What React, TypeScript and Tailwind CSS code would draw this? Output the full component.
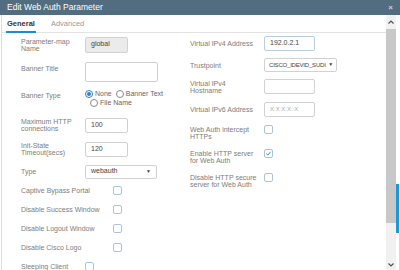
import React from "react";

const font = { fontFamily: '"Liberation Sans", Arial, sans-serif' };

function Checkbox({ checked = false }: { checked?: boolean }) {
  return (
    <div className="w-[9px] h-[9px] rounded-[2px] border border-[#a9c3e0] bg-white flex items-center justify-center">
      {checked && (
        <svg width="7" height="7" viewBox="0 0 8 8">
          <path d="M1.5 4.2 L3.2 5.8 L6.5 2" stroke="#3b82c4" strokeWidth="1.1" fill="none" />
        </svg>
      )}
    </div>
  );
}

function Radio({ checked = false }: { checked?: boolean }) {
  return (
    <div className={`w-[8px] h-[8px] rounded-full border ${checked ? "border-[#2d7fd0]" : "border-[#8a8a8a]"} bg-white flex items-center justify-center`}>
      {checked && <div className="w-[4px] h-[4px] rounded-full bg-[#2d7fd0]" />}
    </div>
  );
}

function Label({ children, w }: { children: React.ReactNode; w: string }) {
  return <div className={`${w} text-[7px] leading-[7px] text-[#7c7c7c]`}>{children}</div>;
}

export default function App() {
  return (
    <div className="w-[400px] h-[270px] overflow-hidden bg-white flex flex-col" style={font}>
      <div className="h-[15px] bg-[#526c80] flex items-center justify-between pl-[7px] pr-[7px] shrink-0">
        <span className="text-white text-[8.5px] leading-[9px]">Edit Web Auth Parameter</span>
        <span className="text-[#c9d3db] text-[8px] leading-[8px] font-bold">×</span>
      </div>
      <div className="flex-1 flex min-h-0">
        <div className="w-[2px] border-r border-[#dcdcdc] shrink-0" />
        <div className="flex-1 flex flex-col min-w-0">
          <div className="h-[18px] border-b border-[#e3e3e3] flex items-end pl-[4px] shrink-0">
            <div className="px-[1px] pb-[3px] border-b-2 border-[#1f8ad4] mb-[-1px] text-[7.5px] leading-[8px] text-[#333] font-semibold">General</div>
            <div className="ml-[15px] pb-[4px] text-[7.5px] leading-[8px] text-[#999]">Advanced</div>
          </div>
          <div className="flex">
            {/* left column */}
            <div className="w-[168px] pl-[19px] flex flex-col">
              <div className="mt-[3px] h-[17px] flex items-center">
                <Label w="w-[64px]">Parameter-map<br />Name</Label>
                <div className="w-[43px] h-[16px] rounded-[2px] border border-[#d2d2d2] bg-[#ebebeb] flex items-center pl-[5px] text-[7px] text-[#444]">global</div>
              </div>
              <div className="mt-[8px] h-[21px] flex items-center">
                <Label w="w-[64px] self-start mt-[4px]">Banner Title</Label>
                <div className="w-[73px] h-[20px] rounded-[2px] border border-[#d2d2d2] bg-white" />
              </div>
              <div className="mt-[8px] h-[20px] flex items-start">
                <Label w="w-[64px] mt-[2px]">Banner Type</Label>
                <div className="flex flex-col text-[7px] leading-[8px] text-[#666]">
                  <div className="flex items-center">
                    <Radio checked />
                    <span className="ml-[2px]">None</span>
                    <div className="ml-[4px]"><Radio /></div>
                    <span className="ml-[2px]">Banner Text</span>
                  </div>
                  <div className="flex items-center mt-[1px] ml-[5px]">
                    <Radio />
                    <span className="ml-[2px]">File Name</span>
                  </div>
                </div>
              </div>
              <div className="mt-[7px] h-[16px] flex items-center">
                <Label w="w-[64px]">Maximum HTTP<br />connections</Label>
                <div className="w-[43px] h-[15px] rounded-[2px] border border-[#d2d2d2] bg-white flex items-center pl-[5px] text-[7px] text-[#444]">100</div>
              </div>
              <div className="mt-[8px] h-[16px] flex items-center">
                <Label w="w-[64px]">Init-State<br />Timeout(secs)</Label>
                <div className="w-[43px] h-[15px] rounded-[2px] border border-[#d2d2d2] bg-white flex items-center pl-[5px] text-[7px] text-[#444]">120</div>
              </div>
              <div className="mt-[7px] h-[15px] flex items-center">
                <Label w="w-[64px]">Type</Label>
                <div className="w-[72px] h-[14px] rounded-[2px] border border-[#d2d2d2] bg-white flex items-center justify-between px-[5px] text-[7px] text-[#444]">
                  <span>webauth</span><span className="text-[5px]">▼</span>
                </div>
              </div>
              {["Captive Bypass Portal", "Disable Success Window", "Disable Logout Window", "Disable Cisco Logo"].map((t) => (
                <div key={t} className="mt-[4px] h-[15px] flex items-center">
                  <Label w="w-[92px]">{t}</Label>
                  <Checkbox />
                </div>
              ))}
              <div className="mt-[4px] h-[15px] flex items-center">
                <Label w="w-[64px]">Sleeping Client</Label>
                <Checkbox />
              </div>
            </div>
            {/* right column */}
            <div className="flex-1 pl-[20px] flex flex-col">
              <div className="mt-[3px] h-[15px] flex items-center">
                <Label w="w-[74px]">Virtual IPv4 Address</Label>
                <div className="w-[51px] h-[15px] rounded-[2px] border border-[#b9cde2] bg-white flex items-center pl-[5px] text-[7px] text-[#444]">192.0.2.1</div>
              </div>
              <div className="mt-[7px] h-[14px] flex items-center">
                <Label w="w-[74px]">Trustpoint</Label>
                <div className="w-[73px] h-[14px] rounded-[2px] border border-[#d2d2d2] bg-white flex items-center justify-between pl-[4px] pr-[3px] text-[6px] tracking-[-0.2px] text-[#444]">
                  <span>CISCO_IDEVID_SUDI</span><span className="text-[5px]">▼</span>
                </div>
              </div>
              <div className="mt-[7px] h-[15px] flex items-center">
                <Label w="w-[74px]">Virtual IPv4<br />Hostname</Label>
                <div className="w-[51px] h-[15px] rounded-[2px] border border-[#d2d2d2] bg-white" />
              </div>
              <div className="mt-[8px] h-[15px] flex items-center">
                <Label w="w-[74px]">Virtual IPv6 Address</Label>
                <div className="w-[51px] h-[15px] rounded-[2px] border border-[#d2d2d2] bg-white flex items-center pl-[5px] text-[6px] text-[#aaa]">X:X:X:X::X</div>
              </div>
              <div className="mt-[8px] h-[16px] flex items-start">
                <Label w="w-[74px] mt-[1px]">Web Auth intercept<br />HTTPs</Label>
                <Checkbox />
              </div>
              <div className="mt-[8px] h-[16px] flex items-start">
                <Label w="w-[74px] mt-[1px]">Enable HTTP server<br />for Web Auth</Label>
                <Checkbox checked />
              </div>
              <div className="mt-[8px] h-[16px] flex items-start">
                <Label w="w-[74px] mt-[1px]">Disable HTTP secure<br />server for Web Auth</Label>
                <Checkbox />
              </div>
            </div>
          </div>
        </div>
        {/* scrollbar */}
        <div className="w-[10px] bg-[#f1f1f1] flex flex-col items-center shrink-0">
          <div className="h-[14px] flex items-center justify-center">
            <svg width="6" height="4" viewBox="0 0 6 4"><path d="M0.5 3.5 L3 1 L5.5 3.5" stroke="#505050" strokeWidth="1.2" fill="none" /></svg>
          </div>
          <div className="w-[10px] h-[194px] bg-[#c8c8c8]" />
          <div className="flex-1" />
          <div className="h-[10px] flex items-center justify-center">
            <svg width="6" height="4" viewBox="0 0 6 4"><path d="M0.5 0.5 L3 3 L5.5 0.5" stroke="#505050" strokeWidth="1.2" fill="none" /></svg>
          </div>
        </div>
        <div className="w-[4px] shrink-0 flex flex-col">
          <div className="h-[169px]" />
          <div className="h-[49px] w-[3px] bg-[#1a9ad8]" />
          <div className="flex-1 border-r border-[#d8d8d8]" />
        </div>
      </div>
    </div>
  );
}
